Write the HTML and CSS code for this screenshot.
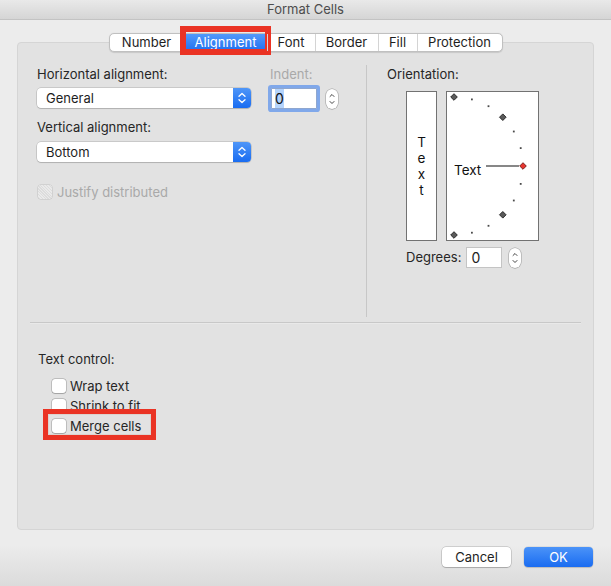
FILE: index.html
```html
<!DOCTYPE html>
<html lang="en">
<head>
<meta charset="utf-8">
<title>Format Cells</title>
<link rel="stylesheet" href="styles.css">
</head>
<body>
<div class="titlebar">Format Cells</div>
<div class="content">
  <div class="tabs-wrap">
    <div class="tabs">
      <div class="tab w-number">Number</div>
      <div class="tab w-align selected">Alignment<span class="mark mark-tab"></span></div>
      <div class="tab w-font">Font</div>
      <div class="tab w-border">Border</div>
      <div class="tab w-fill">Fill</div>
      <div class="tab w-prot">Protection</div>
    </div>
  </div>
  <div class="panel">
    <div class="top">
      <div class="left">
        <div class="col-a">
          <div class="label">Horizontal alignment:</div>
          <div class="select sel-1">
            <span class="sel-text">General</span>
            <span class="sel-arrows">
              <svg width="18" height="20" viewBox="0 0 18 20"><path d="M6 8.2 L9 5.4 L12 8.2 M6 11.8 L9 14.6 L12 11.8" fill="none" stroke="#fff" stroke-width="1.3" stroke-linecap="round" stroke-linejoin="round"/></svg>
            </span>
          </div>
          <div class="label lbl-2">Vertical alignment:</div>
          <div class="select sel-2">
            <span class="sel-text">Bottom</span>
            <span class="sel-arrows">
              <svg width="18" height="20" viewBox="0 0 18 20"><path d="M6 8.2 L9 5.4 L12 8.2 M6 11.8 L9 14.6 L12 11.8" fill="none" stroke="#fff" stroke-width="1.3" stroke-linecap="round" stroke-linejoin="round"/></svg>
            </span>
          </div>
          <div class="check-row disabled justify">
            <span class="box"></span><span class="check-text">Justify distributed</span>
          </div>
        </div>
        <div class="col-b">
          <div class="label muted">Indent:</div>
          <div class="indent-row">
            <div class="indent-input"><span class="sel-hl">0</span></div>
            <div class="stepper">
              <svg width="12" height="20" viewBox="0 0 12 20"><path d="M4 7.5 L6 5.5 L8 7.5 M4 12.5 L6 14.5 L8 12.5" fill="none" stroke="#444" stroke-width="1" stroke-linecap="round" stroke-linejoin="round"/></svg>
            </div>
          </div>
        </div>
      </div>
      <div class="vsep"></div>
      <div class="right">
        <div class="label">Orientation:</div>
        <div class="orient">
          <div class="vtext"><span>T</span><span>e</span><span>x</span><span>t</span></div>
          <div class="dial">
            <svg width="91" height="148" viewBox="0 0 91 148">
              <g fill="#4a4a4a">
                <rect x="24" y="6.5" width="1.8" height="1.8"/>
                <rect x="40.6" y="13.3" width="1.8" height="1.8"/>
                <rect x="65.9" y="38.6" width="1.8" height="1.8"/>
                <rect x="72.8" y="55.2" width="1.8" height="1.8"/>
                <rect x="72.8" y="91" width="1.8" height="1.8"/>
                <rect x="65.9" y="107.6" width="1.8" height="1.8"/>
                <rect x="40.6" y="132.9" width="1.8" height="1.8"/>
                <rect x="24" y="139.8" width="1.8" height="1.8"/>
              </g>
              <g fill="#5a5a5a" stroke="#1e1e1e" stroke-width="0.9">
                <path d="M7 1.7 L10.3 5 L7 8.3 L3.7 5 Z"/>
                <path d="M55.8 21.9 L59.1 25.2 L55.8 28.5 L52.5 25.2 Z"/>
                <path d="M55.8 119.5 L59.1 122.8 L55.8 126.1 L52.5 122.8 Z"/>
                <path d="M7 139.7 L10.3 143 L7 146.3 L3.7 143 Z"/>
              </g>
              <path d="M76 70.7 L79.3 74 L76 77.3 L72.7 74 Z" fill="#e8352f" stroke="#6d1a16" stroke-width="0.9"/>
              <line x1="39" y1="74" x2="72" y2="74" stroke="#111" stroke-width="1.1"/>
              <text x="7" y="82.5" class="dial-text">Text</text>
            </svg>
          </div>
        </div>
        <div class="deg-row">
          <span class="deg-label">Degrees:</span>
          <div class="deg-input">0</div>
          <div class="stepper deg-stepper">
            <svg width="12" height="20" viewBox="0 0 12 20"><path d="M4 7.5 L6 5.5 L8 7.5 M4 12.5 L6 14.5 L8 12.5" fill="none" stroke="#444" stroke-width="1" stroke-linecap="round" stroke-linejoin="round"/></svg>
          </div>
        </div>
      </div>
    </div>
    <div class="hsep"></div>
    <div class="bottom">
      <div class="label">Text control:</div>
      <div class="checks">
        <div class="check-row"><span class="box"></span><span class="check-text">Wrap text</span></div>
        <div class="check-row"><span class="box"></span><span class="check-text">Shrink to fit</span></div>
        <div class="check-row merge"><span class="box"></span><span class="check-text">Merge cells</span><span class="mark mark-merge"></span></div>
      </div>
    </div>
  </div>
  <div class="buttons">
    <div class="btn cancel">Cancel</div>
    <div class="btn ok">OK</div>
  </div>
</div>
</body>
</html>
```
FILE: styles.css
```css
* { box-sizing: border-box; }
html, body { margin: 0; padding: 0; }
body {
  width: 611px;
  height: 586px;
  overflow: hidden;
  font-family: "Inter", "Liberation Sans", sans-serif;
  font-size: 13px;
  color: #262626;
  background: linear-gradient(to bottom, #ececec 0, #ececec 545px, #dbdbdb 586px);
}
.titlebar {
  height: 20px;
  line-height: 19px;
  text-align: center;
  color: #4d4d4d;
  font-size: 13px;
  background: linear-gradient(to bottom, #e9e9e9, #d5d5d5);
  border-bottom: 1px solid #c3c3c3;
}
.content { padding: 13px 17px 0 17px; }
.tabs-wrap { display: flex; justify-content: center; position: relative; z-index: 2; }
.tabs {
  display: flex;
  height: 19px;
  background: #fff;
  border: 1px solid #c0c0c0;
  border-radius: 5px;
  box-shadow: 0 0.5px 1px rgba(0,0,0,0.12);
}
.tab {
  height: 17px;
  line-height: 17px;
  text-align: center;
  color: #1e1e1e;
  border-left: 1px solid #d4d4d4;
  position: relative;
}
.tab:first-child { border-left: 0; border-radius: 4px 0 0 4px; }
.tab:last-child { border-radius: 0 4px 4px 0; }
.w-number { width: 74px; }
.w-align { width: 83px; }
.w-font { width: 48px; }
.w-border { width: 63px; }
.w-fill { width: 39px; }
.w-prot { width: 85px; }
.tab.selected {
  background: linear-gradient(to bottom, #5399f9, #1f70f2);
  color: #fff;
  border-left-color: #2f7af3;
}
.mark { position: absolute; border: 6px solid #ea3324; pointer-events: none; }
.mark-tab { left: -5px; top: -8px; width: 91px; height: 29px; border-width: 6px; }
.panel {
  margin-top: -10px;
  height: 488px;
  background: #e2e2e2;
  border: 1px solid #d5d5d5;
  border-radius: 4px;
}
.top { display: flex; height: 274px; padding-top: 22px; }
.left { width: 348px; padding-left: 19px; display: flex; }
.col-a { width: 214px; }
.col-b { margin-left: 19px; }
.vsep { width: 1px; background: #c7c7c7; }
.right { padding-left: 20px; }
.label { line-height: 18px; height: 18px; color: #262626; white-space: nowrap; }
.label.muted { color: #a9a9a9; }
.select {
  display: flex;
  height: 20px;
  background: #fff;
  border-radius: 4px;
  box-shadow: 0 0 0 0.5px rgba(0,0,0,0.22), 0 1px 1px rgba(0,0,0,0.12);
  margin-top: 5px;
}
.sel-text { flex: 1; line-height: 20px; padding-left: 9px; color: #1e1e1e; }
.sel-arrows {
  width: 18px;
  height: 20px;
  border-radius: 0 4px 4px 0;
  background: linear-gradient(to bottom, #4f96f8, #196cf1);
  display: flex;
}
.lbl-2 { margin-top: 10px; }
.sel-2 { margin-top: 6px; }
.check-row { display: flex; align-items: center; height: 20px; position: relative; }
.box {
  width: 14px;
  height: 14px;
  background: #fff;
  border-radius: 3px;
  box-shadow: 0 0 0 0.5px rgba(0,0,0,0.3), 0 0.5px 1px rgba(0,0,0,0.15);
}
.check-text { margin-left: 4px; color: #262626; line-height: 20px; }
.check-row.disabled .box {
  background: repeating-linear-gradient(45deg, #eaeaea 0 1px, #dcdcdc 1px 2px);
  box-shadow: 0 0 0 0.5px rgba(0,0,0,0.15);
}
.check-row.disabled .check-text { color: #a9a9a9; margin-left: 5px; }
.justify { margin-top: 20px; padding-left: 1px; }
.indent-row { display: flex; align-items: flex-start; margin-top: 5px; }
.indent-input {
  width: 46px;
  height: 21px;
  margin-left: 1px;
  background: #fff;
  border: 1px solid #8fa7cf;
  border-radius: 1px;
  box-shadow: 0 0 0 3px #80a8ea;
  padding-left: 3px;
  line-height: 19px;
  font-size: 14px;
  color: #111;
}
.sel-hl { background: #b4d3fb; padding: 1px 0; }
.stepper {
  width: 12px;
  height: 20px;
  margin-left: 9px;
  margin-top: 1px;
  background: #fff;
  border-radius: 6px;
  box-shadow: 0 0 0 0.5px rgba(0,0,0,0.3), 0 0.5px 1px rgba(0,0,0,0.12);
  display: flex;
}
.orient { display: flex; gap: 9px; margin-top: 8px; padding-left: 19px; }
.vtext {
  width: 31px;
  height: 150px;
  background: #fff;
  border: 1px solid #727272;
  display: flex;
  flex-direction: column;
  align-items: center;
  justify-content: center;
}
.vtext span { line-height: 16px; font-size: 13.5px; color: #111; }
.dial {
  width: 93px;
  height: 150px;
  background: #fff;
  border: 1px solid #727272;
}
.dial svg { display: block; }
.dial-text { font-family: "Inter", "Liberation Sans", sans-serif; font-size: 13.5px; fill: #111; }
.deg-row { display: flex; align-items: center; margin-top: 5px; padding-left: 19px; height: 22px; }
.deg-label { color: #262626; }
.deg-input {
  width: 36px;
  height: 21px;
  margin-left: 5px;
  background: #fff;
  border: 1px solid #c4c4c4;
  line-height: 19px;
  padding-left: 4px;
  font-size: 14px;
  color: #222;
}
.deg-stepper { margin-left: 7px; margin-top: 2px; }
.hsep { margin: 5px 12px 0 12px; height: 2px; border-top: 1px solid #c8c8c8; border-bottom: 1px solid #e9e9e9; }
.bottom { padding-left: 20px; padding-top: 26px; }
.checks { padding-left: 14px; margin-top: 8px; }
.mark-merge { left: -9px; top: -7px; width: 113px; height: 31px; border-width: 5px; box-shadow: inset 0 0 0 1px #dcd3cf; }
.buttons { display: flex; justify-content: flex-end; gap: 13px; margin-top: 17px; padding-right: 1px; }
.btn {
  width: 69px;
  height: 20px;
  line-height: 20px;
  text-align: center;
  border-radius: 4px;
  font-size: 13px;
}
.cancel {
  background: #fff;
  color: #1e1e1e;
  box-shadow: 0 0 0 0.5px rgba(0,0,0,0.25), 0 1px 1px rgba(0,0,0,0.15);
}
.ok {
  background: linear-gradient(to bottom, #4b93f8, #1a6cf1);
  color: #fff;
  box-shadow: 0 0 0 0.5px rgba(0,0,0,0.12), 0 1px 1px rgba(0,0,0,0.12);
}
```
